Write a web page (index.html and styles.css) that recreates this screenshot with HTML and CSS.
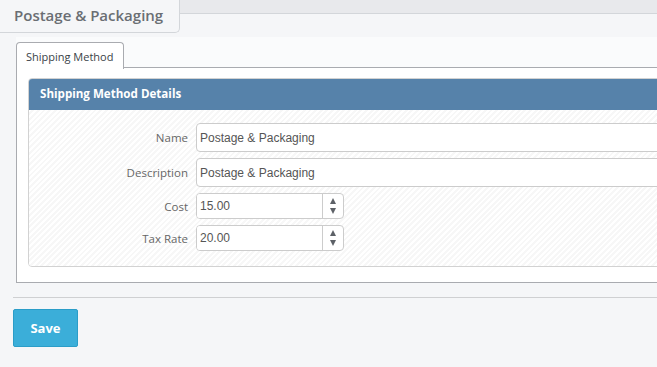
FILE: index.html
```html
<!DOCTYPE html>
<html lang="en">
<head>
    <meta charset="UTF-8">
    <title>Postage &amp; Packaging</title>
    <link rel="stylesheet" href="styles.css">
</head>
<body>
    <div class="page-head">
        <div class="page-tab">Postage &amp; Packaging</div>
        <div class="page-head-fill"></div>
    </div>

    <div class="page-body">
        <div class="tabs">
            <div class="tab-strip">
                <div class="tab active">Shipping Method</div>
            </div>

            <div class="tab-panel">
                <div class="box">
                    <div class="box-title">Shipping Method Details</div>
                    <div class="box-body">
                        <div class="form-row">
                            <label class="form-label">Name</label>
                            <input class="text-input" type="text" value="Postage &amp; Packaging">
                        </div>
                        <div class="form-row">
                            <label class="form-label">Description</label>
                            <input class="text-input" type="text" value="Postage &amp; Packaging">
                        </div>
                        <div class="form-row">
                            <label class="form-label">Cost</label>
                            <div class="number-input">
                                <input type="text" value="15.00">
                                <span class="spinner">
                                    <span class="arrow-up"></span>
                                    <span class="arrow-down"></span>
                                </span>
                            </div>
                        </div>
                        <div class="form-row">
                            <label class="form-label">Tax Rate</label>
                            <div class="number-input">
                                <input type="text" value="20.00">
                                <span class="spinner">
                                    <span class="arrow-up"></span>
                                    <span class="arrow-down"></span>
                                </span>
                            </div>
                        </div>
                    </div>
                </div>
            </div>
        </div>

        <div class="form-actions">
            <button class="btn-save" type="button">Save</button>
        </div>
    </div>
</body>
</html>
```

FILE: styles.css
```css
* {
    box-sizing: border-box;
}

body {
    margin: 0;
    background: #f5f6f8;
    font-family: 'Open Sans', 'Liberation Sans', sans-serif;
    overflow: hidden;
}

/* page header tab */
.page-head {
    display: flex;
    align-items: flex-start;
}

.page-tab {
    width: 180px;
    height: 33px;
    padding: 5px 0 0 14px;
    font-size: 15px;
    font-weight: 600;
    color: #6a6e73;
    background: #f5f6f8;
    border-right: 1px solid #d3d6da;
    border-bottom: 1px solid #d3d6da;
    border-bottom-right-radius: 5px;
}

.page-head-fill {
    flex: 1;
    height: 14px;
    background: #e8e9ec;
    border-bottom: 1px solid #d3d6da;
}

.page-body {
    padding: 4px 0 0 13px;
}

/* tabs */
.tabs {
    margin-left: 3px;
    margin-right: -200px;
}

.tab-strip {
    display: flex;
    height: 31px;
    padding-top: 5px;
    background: #fafbfc;
    border-bottom: 1px solid #a9abb0;
}

.tab {
    width: 108px;
    height: 27px;
    padding: 6px 0 0 9px;
    font-size: 11px;
    color: #3a3f47;
    background: #fff;
    border: 1px solid #a9abb0;
    border-bottom: none;
    border-radius: 4px 4px 0 0;
}

.tab-panel {
    background: #fff;
    border-left: 1px solid #a9abb0;
    border-bottom: 1px solid #a9abb0;
    padding: 10px 0 15px 11px;
}

/* details box */
.box {
    border: 1px solid #d2d2d2;
    border-radius: 4px;
    overflow: hidden;
}

.box-title {
    height: 31px;
    padding: 7px 0 0 11px;
    background: #5682aa;
    color: #fff;
    font-size: 11.6px;
    font-weight: 700;
}

.box-body {
    display: flex;
    flex-direction: column;
    gap: 6px;
    padding: 13px 0 15px;
    background: repeating-linear-gradient(135deg, #ffffff 0 2px, #f7f7f7 2px 4px);
}

.form-row {
    display: flex;
    align-items: center;
    gap: 8px;
}

.form-label {
    flex: none;
    width: 159px;
    text-align: right;
    font-size: 11.5px;
    color: #666;
}

.text-input {
    flex: none;
    width: 700px;
    height: 29px;
    padding: 0 3px;
    font-family: 'Liberation Sans', Arial, sans-serif;
    font-size: 12px;
    color: #555;
    background: #fff;
    border: 1px solid #cccccc;
    border-radius: 4px;
    outline: none;
}

.number-input {
    flex: none;
    display: flex;
    width: 148px;
    height: 26px;
    background: #fff;
    border: 1px solid #cccccc;
    border-radius: 4px;
    overflow: hidden;
}

.number-input input {
    flex: 1;
    min-width: 0;
    padding: 0 3px;
    border: none;
    outline: none;
    font-family: 'Liberation Sans', Arial, sans-serif;
    font-size: 12px;
    color: #555;
}

.spinner {
    width: 21px;
    display: flex;
    flex-direction: column;
    align-items: center;
    justify-content: center;
    gap: 4px;
    border-left: 1px solid #cccccc;
}

.arrow-up,
.arrow-down {
    width: 0;
    height: 0;
    border-left: 3.5px solid transparent;
    border-right: 3.5px solid transparent;
}

.arrow-up {
    border-bottom: 6px solid #5d6167;
}

.arrow-down {
    border-top: 6px solid #5d6167;
}

/* actions */
.form-actions {
    margin-top: 14px;
    padding-top: 11px;
    border-top: 1px solid #cfd0d2;
}

.btn-save {
    width: 65px;
    height: 38px;
    font-family: 'Open Sans', sans-serif;
    font-size: 13px;
    font-weight: 700;
    color: #fff;
    background: #3baed9;
    border: 1px solid #2b9dc8;
    border-radius: 2px;
}
```
